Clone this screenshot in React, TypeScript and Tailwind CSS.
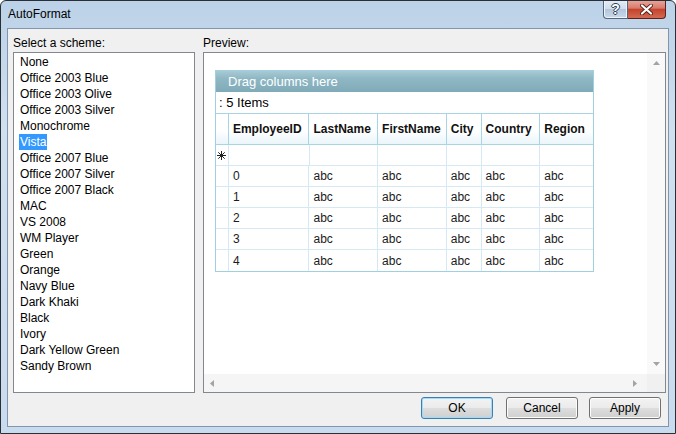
import React from 'react';
import clsx from 'clsx';

const schemes = [
  'None',
  'Office 2003 Blue',
  'Office 2003 Olive',
  'Office 2003 Silver',
  'Monochrome',
  'Vista',
  'Office 2007 Blue',
  'Office 2007 Silver',
  'Office 2007 Black',
  'MAC',
  'VS 2008',
  'WM Player',
  'Green',
  'Orange',
  'Navy Blue',
  'Dark Khaki',
  'Black',
  'Ivory',
  'Dark Yellow Green',
  'Sandy Brown',
];

const columns = [
  { name: 'EmployeeID', w: 'w-[81px]' },
  { name: 'LastName', w: 'w-[69px]' },
  { name: 'FirstName', w: 'w-[69px]' },
  { name: 'City', w: 'w-[35px]' },
  { name: 'Country', w: 'w-[59px]' },
  { name: 'Region', w: 'w-[53px]' },
];

const rows = ['0', '1', '2', '3', '4'];

const ui = "font-['Liberation_Sans',Arial,sans-serif]";

// small grey scroll arrow
const Arrow = ({ dir }: { dir: 'up' | 'down' | 'left' | 'right' }) => {
  const pts = {
    up: '0,4 3.5,0 7,4',
    down: '0,0 3.5,4 7,0',
    left: '4,0 0,3.5 4,7',
    right: '0,0 4,3.5 0,7',
  }[dir];
  const vertical = dir === 'up' || dir === 'down';
  return (
    <svg width={vertical ? 7 : 4} height={vertical ? 4 : 7} viewBox={vertical ? '0 0 7 4' : '0 0 4 7'}>
      <polygon points={pts} fill="#a3a3a3" />
    </svg>
  );
};

const Star = () => (
  <svg width="9" height="9" viewBox="0 0 9 9" stroke="#222" strokeWidth="1">
    <line x1="4.5" y1="0" x2="4.5" y2="9" />
    <line x1="0" y1="4.5" x2="9" y2="4.5" />
    <line x1="1.3" y1="1.3" x2="7.7" y2="7.7" />
    <line x1="7.7" y1="1.3" x2="1.3" y2="7.7" />
  </svg>
);

const DialogButton = ({ label, focused, className }: { label: string; focused?: boolean; className?: string }) => (
  <button
    className={clsx(
      'w-[72px] h-[22px] rounded-[3px] border text-[12px] text-black bg-[linear-gradient(to_bottom,#f3f3f3_0%,#ebebeb_48%,#dddddd_52%,#cfcfcf_100%)]',
      focused ? 'border-[#3c7fb1] shadow-[inset_0_0_0_1px_#9fdcf8]' : 'border-[#707070] shadow-[inset_0_0_0_1px_#fcfcfc]',
      ui,
      className
    )}
  >
    {label}
  </button>
);

export default function App() {
  return (
    <div className={clsx('w-[676px] h-[434px] flex flex-col border border-[#2a2f36] rounded-t-[6px] overflow-hidden bg-[linear-gradient(to_bottom,#bcd2e8_0%,#cfe0f0_30%,#c9dbee_100%)]', ui)}>
      {/* title bar */}
      <div className="h-[27px] flex items-start justify-between">
        <div className="pl-[7px] pt-[5px] text-[12px] text-black leading-[16px]">AutoFormat</div>
        <div className="flex mr-[9px] -mt-[1px]">
          <div className="w-[25px] h-[19px] flex items-center justify-center rounded-bl-[4px] border border-[#56667a] border-t-0 shadow-[inset_0_0_0_1px_#eef4fa] bg-[linear-gradient(to_bottom,#e6eef7_0%,#d0dded_48%,#b3c6dc_52%,#cbdaeb_100%)] text-[14px] font-bold leading-none text-white [text-shadow:1px_0_0_#2f3f52,-1px_0_0_#2f3f52,0_1px_0_#2f3f52,0_-1px_0_#2f3f52]">
            ?
          </div>
          <div className="w-[38px] h-[19px] flex items-center justify-center rounded-br-[4px] border border-[#5e2019] border-t-0 border-l-0 bg-[linear-gradient(to_bottom,#e9a99d_0%,#d87a6c_45%,#c4432f_52%,#d36a4f_100%)]">
            <svg width="13" height="11" viewBox="0 0 13 11">
              <path d="M2 1.5 L11 9.5 M11 1.5 L2 9.5" stroke="#5b2319" strokeWidth="4" strokeLinecap="round" />
              <path d="M2 1.5 L11 9.5 M11 1.5 L2 9.5" stroke="#ffffff" strokeWidth="2.2" strokeLinecap="round" />
            </svg>
          </div>
        </div>
      </div>

      {/* client area */}
      <div className="flex-1 mx-[6px] mb-[6px] border border-[#8395ab] bg-[#f0f0f0] flex flex-col pl-[5px] pr-[2px] pt-[7px]">
        <div className="flex gap-[8px]">
          {/* scheme list */}
          <div className="w-[182px] flex flex-col">
            <div className="h-[16px] text-[12px] leading-[14px] text-black">Select a scheme:</div>
            <div className="h-[341px] border border-[#828790] bg-white pt-[1px]">
              {schemes.map((s) => (
                <div key={s} className="h-[16px] pl-[5px] flex items-center text-[12px] text-black">
                  <span className={clsx('px-[1px] leading-[16px]', s === 'Vista' && 'bg-[#3399ff] text-white')}>{s}</span>
                </div>
              ))}
            </div>
          </div>

          {/* preview */}
          <div className="flex-1 flex flex-col">
            <div className="h-[16px] text-[12px] leading-[14px] text-black">Preview:</div>
            <div className="h-[341px] border border-[#828790] bg-white flex flex-col">
              <div className="flex-1 flex">
                <div className="flex-1 pl-[11px] pt-[17px]">
                  {/* grid */}
                  <div className="w-[379px] border border-[#9fcfe0] text-[12px] text-[#1b1b1b]">
                    <div className="h-[21px] pl-[12px] flex items-center text-[13px] text-white bg-[linear-gradient(to_bottom,#a8cad4_0%,#8fb8c4_35%,#7faab7_100%)]">
                      Drag columns here
                    </div>
                    <div className="h-[22px] pl-[3px] flex items-center text-[13px] text-black border-b border-[#a9d4e4]">: 5 Items</div>
                    <div className="h-[31px] flex border-b border-[#a9d4e4] bg-[linear-gradient(to_bottom,#ffffff_0%,#ffffff_55%,#eaf5fa_100%)]">
                      <div className="w-[13px] border-r border-[#a9d4e4]" />
                      {columns.map((c, i) => (
                        <div
                          key={c.name}
                          className={clsx(c.w, 'px-[4px] flex items-center font-bold text-[#111]', i < columns.length - 1 && 'border-r border-[#a9d4e4]')}
                        >
                          {c.name}
                        </div>
                      ))}
                    </div>
                    <div className="h-[21px] flex border-b border-[#d4e9f2]">
                      <div className="w-[13px] flex items-center justify-center border-r border-[#d4e9f2]">
                        <Star />
                      </div>
                      {columns.map((c, i) => (
                        <div key={c.name} className={clsx(c.w, i < columns.length - 1 && 'border-r border-[#d4e9f2]')} />
                      ))}
                    </div>
                    {rows.map((r, ri) => (
                      <div key={r} className={clsx('h-[21px] flex', ri < rows.length - 1 && 'border-b border-[#d4e9f2]')}>
                        <div className="w-[13px] border-r border-[#d4e9f2]" />
                        {columns.map((c, i) => (
                          <div
                            key={c.name}
                            className={clsx(c.w, 'px-[4px] flex items-center', i < columns.length - 1 && 'border-r border-[#d4e9f2]')}
                          >
                            {i === 0 ? r : 'abc'}
                          </div>
                        ))}
                      </div>
                    ))}
                  </div>
                </div>
                {/* vertical scrollbar */}
                <div className="w-[18px] bg-[#f9f9f9] flex flex-col items-center justify-between py-[8px]">
                  <Arrow dir="up" />
                  <Arrow dir="down" />
                </div>
              </div>
              {/* horizontal scrollbar */}
              <div className="h-[18px] flex">
                <div className="flex-1 bg-[#f5f5f5] flex items-center justify-between pl-[6px] pr-[10px]">
                  <Arrow dir="left" />
                  <Arrow dir="right" />
                </div>
                <div className="w-[18px] bg-[#f0f0f0]" />
              </div>
            </div>
          </div>
        </div>

        {/* buttons */}
        <div className="flex justify-end mt-[4px] pr-[5px]">
          <DialogButton label="OK" focused />
          <DialogButton label="Cancel" className="ml-[13px]" />
          <DialogButton label="Apply" className="ml-[11px]" />
        </div>
      </div>
    </div>
  );
}
